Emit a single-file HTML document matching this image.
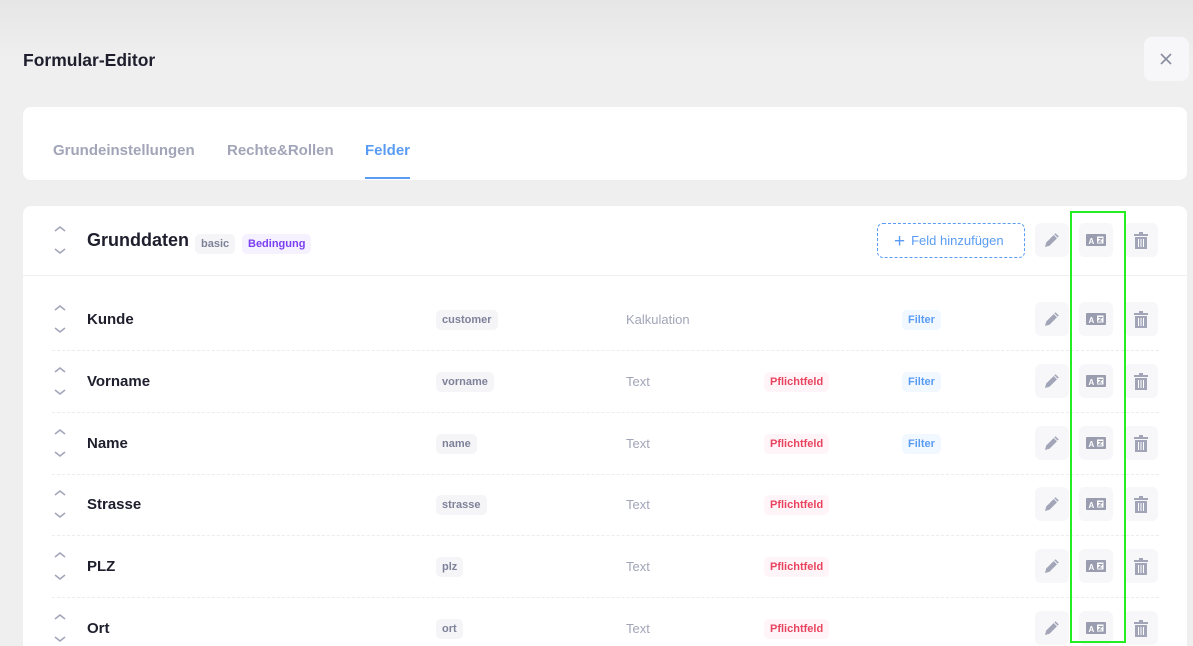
<!DOCTYPE html><html><head><meta charset="utf-8"><style>
*{box-sizing:border-box;margin:0;padding:0}
html,body{width:1193px;height:646px;overflow:hidden}
body{background:linear-gradient(#e6e6e6,#efefef 60px,#efefef);font-family:"Liberation Sans",sans-serif;position:relative}
.abs{position:absolute}
h1{position:absolute;left:23px;top:50px;font-size:17.5px;font-weight:bold;color:#1e1e2d}
.close{left:1144px;top:37px;width:45px;height:44px;background:#f7f7f9;border-radius:8px}
.card{background:#fff;border-radius:8px;position:absolute;left:23px;width:1164px}
.tab{position:absolute;top:142px;font-size:15px;font-weight:bold;color:#a1a5b7}
.pill{position:absolute;font-size:11px;font-weight:bold;padding:4px 6px;border-radius:5px;line-height:12px}
.key{background:#f5f5f8;color:#7e8299}
.req{background:#fff5f8;color:#e8445f}
.flt{background:#f1f8ff;color:#5a9cf3}
.btn{position:absolute;width:34px;height:34px;background:#f7f7f9;border-radius:6px;display:flex;align-items:center;justify-content:center}
.nm{position:absolute;left:87px;font-size:15px;font-weight:bold;color:#1e1e2d}
.ty{position:absolute;left:626px;font-size:13px;color:#a1a5b7}
.sep{position:absolute;left:52px;width:1107px;border-top:1px dashed #ececf0}
</style></head><body>
<h1>Formular-Editor</h1>
<div class="abs close"><svg width="45" height="44"><path d="M17 17l10 10M27 17l-10 10" stroke="#8a8ca0" stroke-width="1.6"/></svg></div>
<div class="card" style="top:107px;height:73px"></div>
<div class="tab" style="left:53px">Grundeinstellungen</div>
<div class="tab" style="left:227px">Rechte&amp;Rollen</div>
<div class="tab" style="left:365px;color:#5a9cf3">Felder</div>
<div class="abs" style="left:365px;top:177px;width:45px;height:2px;background:#5a9cf3"></div>
<div class="card" style="top:206px;height:460px"></div>
<div class="abs" style="left:23px;top:275px;width:1164px;border-top:1px solid #f0f0f3"></div>
<div class="abs" style="left:87px;top:230px;font-size:18px;font-weight:bold;color:#1e1e2d">Grunddaten</div>
<div class="pill key" style="left:195px;top:234px">basic</div>
<div class="pill" style="left:242px;top:234px;background:#f6f1ff;color:#7b3ff2">Bedingung</div>
<div class="abs" style="left:877px;top:223px;width:148px;height:35px;border:1px dashed #5a9cf3;border-radius:6px;color:#5a9cf3;font-size:13px;line-height:33px;padding-left:16px"><span style="font-size:19px;vertical-align:-2px;margin-right:6px">+</span>Feld hinzufügen</div>
<div id="rows"></div>
<div class="abs" style="left:1070px;top:211px;width:56px;height:432px;border:2px solid #22ee22"></div>
<script>
const chev='<svg width="16" height="30"><path d="M3 6l5-4 5 4M3 24l5 4 5-4" fill="none" stroke="#a1a5b7" stroke-width="1.5"/></svg>';
const pen='<svg width="18" height="18"><path d="M2 16l1.2-4.5L12.5 2.2l3.3 3.3-9.3 9.3z" fill="#a1a5b7"/><path d="M11 3.7l3.3 3.3" stroke="#f7f7f9" stroke-width="1"/></svg>';
const az='<svg width="20" height="12"><rect width="20" height="12" rx="1" fill="#9a9cb0"/><text x="2.5" y="10" font-size="8" font-weight="bold" fill="#fff" font-family="Liberation Sans">A</text><rect x="11" y="2.5" width="6.5" height="7" fill="#fff"/><path d="M12.5 4.5h3.5l-3.5 3.5h3.5" stroke="#9a9cb0" stroke-width="1" fill="none"/></svg>';
const tr='<svg width="14" height="17"><rect x="0" y="2" width="14" height="2" fill="#a1a5b7"/><rect x="5" y="0" width="4" height="2" fill="#a1a5b7"/><path d="M1 5h12v12H1z" fill="#a1a5b7"/><path d="M4.5 7v8M7 7v8M9.5 7v8" stroke="#fff" stroke-width="1"/></svg>';
function btns(c){return `<div class="btn" style="left:1035px;top:${c-17}px">${pen}</div><div class="btn" style="left:1079px;top:${c-17}px">${az}</div><div class="btn" style="left:1124px;top:${c-17}px">${tr}</div>`}
let h=`<div class="abs" style="left:52px;top:225px">${chev}</div>`+btns(240);
const rows=[["Kunde","customer","Kalkulation",0,1],["Vorname","vorname","Text",1,1],["Name","name","Text",1,1],["Strasse","strasse","Text",1,0],["PLZ","plz","Text",1,0],["Ort","ort","Text",1,0]];
const cs=[319,381,443,504,566,628];
rows.forEach((r,i)=>{const c=cs[i];
h+=`<div class="abs" style="left:52px;top:${c-15}px">${chev}</div><div class="nm" style="top:${c-8}px">${r[0]}</div><div class="pill key" style="left:436px;top:${c-9}px">${r[1]}</div><div class="ty" style="top:${c-7}px">${r[2]}</div>`;
if(r[3])h+=`<div class="pill req" style="left:764px;top:${c-9}px">Pflichtfeld</div>`;
if(r[4])h+=`<div class="pill flt" style="left:902px;top:${c-9}px">Filter</div>`;
h+=btns(c);
if(i<5)h+=`<div class="sep" style="top:${c+31}px"></div>`;});
document.getElementById('rows').innerHTML=h;
</script>
</body></html>
